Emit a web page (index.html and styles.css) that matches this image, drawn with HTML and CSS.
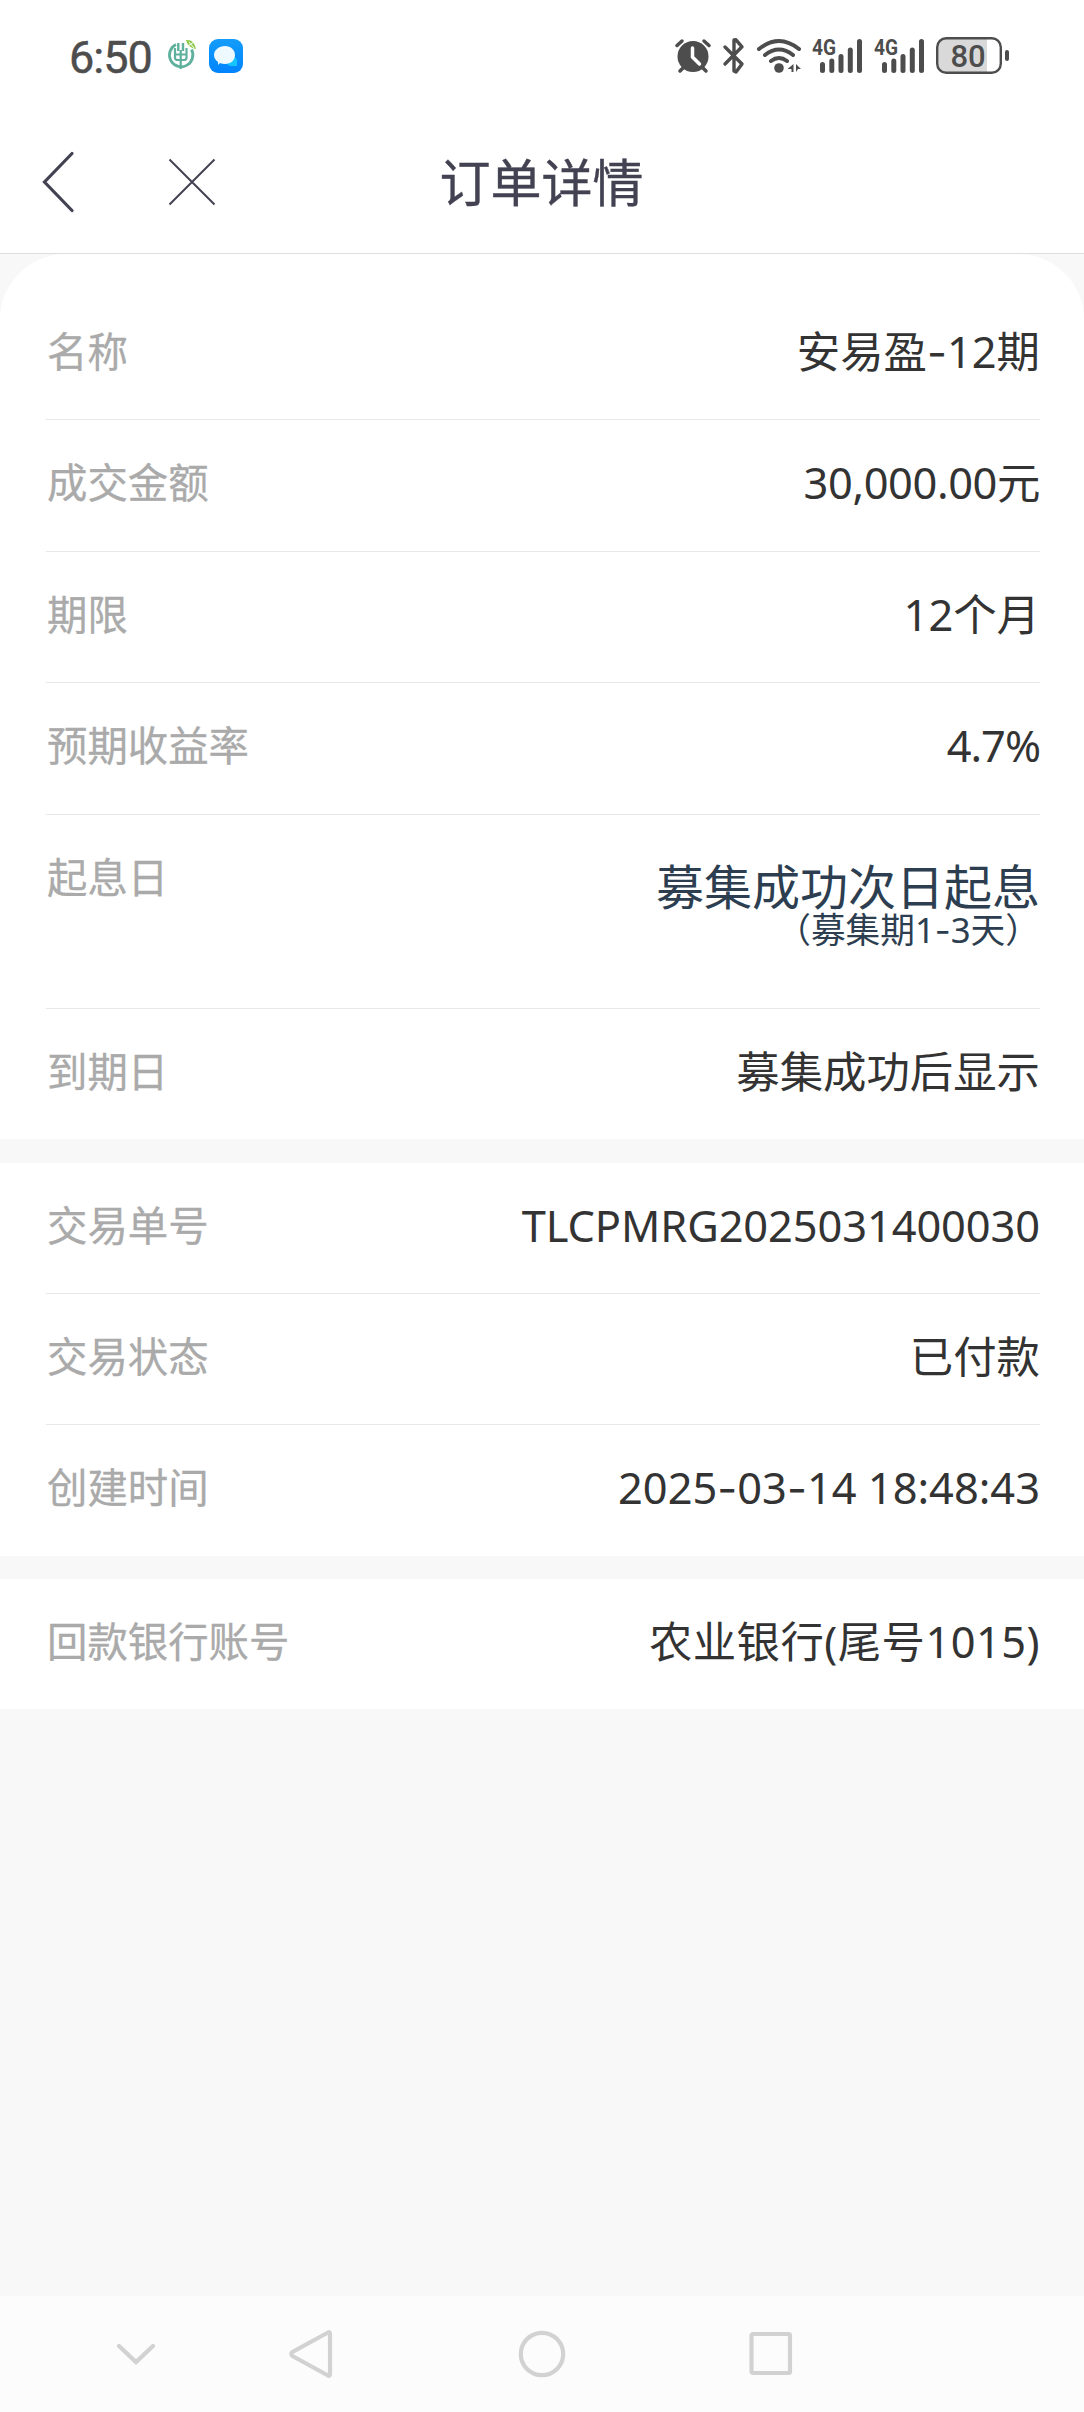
FILE: index.html
```html
<!DOCTYPE html>
<html lang="zh-CN">
<head>
<meta charset="UTF-8">
<title>订单详情</title>
<link rel="stylesheet" href="styles.css">
</head>
<body>
<div class="status">
  <span class="time">6:50</span>
  <svg class="bank" width="32" height="32" viewBox="0 0 32 32" fill="none">
    <g stroke="#5fb09d">
      <path d="M10 5.500a11.700 11.700 0 1 0 15.500 5" stroke-width="2.800"/>
      <path d="M12.300 4v8M17 4v8" stroke-width="2.400"/>
      <path d="M9 9v10q0 2 3 2h5.500q3 0 3-2V9M14.700 11v19M9 15.500h11.500" stroke-width="2.200"/>
    </g>
    <path d="M20 1q8-1 10 9q-8-1-10-9z" fill="#8ecb48"/>
    <path d="M22 7l6-4M23 3l5 6" stroke="#fff" stroke-width="1"/>
  </svg>
  <svg class="chat" width="34" height="34" viewBox="0 0 34 34">
    <defs><linearGradient id="blue" x2="0" y2="1"><stop stop-color="#149cfa"/><stop offset="1" stop-color="#0084ff"/></linearGradient></defs>
    <rect width="34" height="34" rx="9" fill="url(#blue)"/>
    <path d="M20 20q7-4 8 1v6h-6q-4 0-4-4z" fill="#15c3fd"/>
    <path d="M16 7c6 0 10 4 10 9s-4 9-10 9q-3 0-5-1l-2 2v-3q-4-3-4-7c0-5 5-9 11-9z" fill="#eef8ff"/>
  </svg>
  <div class="signals">
    <svg width="36" height="35" viewBox="0 0 36 35" fill="none" stroke="#4d4d4d" stroke-linecap="round">
      <circle cx="18" cy="18.500" r="15.500" fill="#4d4d4d" stroke="none"/>
      <path d="M2 7.500l5-4.500M34 7.500L29 3M8 30l-3 3M28 30l3 3" stroke-width="3.500"/>
      <path d="M17.500 10v9l7 7" stroke="#fff" stroke-width="3.500"/>
    </svg>
    <svg class="bt" width="22" height="36" viewBox="0 0 22 36" fill="none" stroke="#4d4d4d" stroke-width="3.400" stroke-linecap="round" stroke-linejoin="round">
      <path d="M2 9l17 17-6 8-2-1V2l2-.2 6 7L2 26"/>
    </svg>
    <svg class="wifi" width="45" height="36" viewBox="0 0 45 36" fill="none" stroke="#4d4d4d" stroke-width="4" stroke-linecap="round">
      <path d="M2 11q20-16 40 0M8 17q14-11 28 0M14 23q8-6 16 0"/>
      <circle cx="22" cy="30" r="4.800" fill="#4d4d4d" stroke="none"/>
      <path d="M36.500 26v8h-2v-3h-4zM39 26v8l2-3h3z" fill="#4d4d4d" stroke="none"/>
    </svg>
    <svg class="cell" width="50" height="36" viewBox="0 0 50 36">
      <text x="0" y="17" class="net" textLength="24" lengthAdjust="spacingAndGlyphs">4G</text>
      <path d="M10.500 26.500v6M19.800 23v9.500M29 18.500v14M38.300 12v20.500M47.500 3.500v29" class="bars"/>
    </svg>
    <svg class="cell" width="50" height="36" viewBox="0 0 50 36">
      <text x="0" y="17" class="net" textLength="24" lengthAdjust="spacingAndGlyphs">4G</text>
      <path d="M10.500 26.500v6M19.800 23v9.500M29 18.500v14M38.300 12v20.500M47.500 3.500v29" class="bars"/>
    </svg>
    <svg class="battery" width="74" height="37" viewBox="0 0 74 37">
      <path d="M10 1h41v35H10a9 9 0 0 1-9-9V10a9 9 0 0 1 9-9z" fill="#d9d9d9"/>
      <rect x="1.200" y="1.200" width="63.600" height="34.600" rx="9" fill="none" stroke="#4d4d4d" stroke-width="2.400"/>
      <rect x="69" y="13" width="4" height="11" rx="2" fill="#4d4d4d"/>
      <text x="32" y="29.500" text-anchor="middle" class="level">80</text>
    </svg>
  </div>
</div>
<header class="header">
  <svg class="back" width="34" height="62" viewBox="0 0 34 62"><path d="M30 2.500L2.500 31 30 59.500"/></svg>
  <svg class="close" width="48" height="48" viewBox="0 0 48 48"><path d="M1.500 1.500l45 45M46.500 1.500l-45 45"/></svg>
  <h1 class="title">订单详情</h1>
</header>
<main class="content">
  <section class="card card-top">
    <div class="row"><span class="label">名称</span><span class="value">安易盈<span class="dash">-</span>12期</span></div>
    <div class="row"><span class="label">成交金额</span><span class="value amount">30,000.00元</span></div>
    <div class="row"><span class="label">期限</span><span class="value">12个月</span></div>
    <div class="row"><span class="label">预期收益率</span><span class="value rate">4.7%</span></div>
    <div class="row row-tall"><span class="label">起息日</span>
      <div class="start"><span class="start-main">募集成功次日起息</span><span class="start-note">（募集期1<span class="dash">-</span>3天）</span></div>
    </div>
    <div class="row"><span class="label">到期日</span><span class="value">募集成功后显示</span></div>
  </section>
  <section class="card">
    <div class="row"><span class="label">交易单号</span><span class="value code">TLCPMRG2025031400030</span></div>
    <div class="row"><span class="label">交易状态</span><span class="value">已付款</span></div>
    <div class="row"><span class="label">创建时间</span><span class="value">2025<span class="dash">-</span>03<span class="dash">-</span>14 18:48:43</span></div>
  </section>
  <section class="card">
    <div class="row"><span class="label">回款银行账号</span><span class="value account">农业银行(尾号1015)</span></div>
  </section>
</main>
<nav class="nav">
  <svg width="42" height="52" viewBox="0 0 42 52"><path d="M4 18l17 16 17-16"/></svg>
  <svg width="46" height="52" viewBox="0 0 46 52"><path d="M40 4.500q2-1 2 1.500v40q0 2.500-2 1.500L4.500 28q-2.500-2 0-4z"/></svg>
  <svg width="50" height="52" viewBox="0 0 50 52"><circle cx="25" cy="26" r="21.200"/></svg>
  <svg width="46" height="52" viewBox="0 0 46 52"><rect x="4.500" y="6" width="38.500" height="39" rx="1.500"/></svg>
</nav>
</body>
</html>
```
FILE: styles.css
```css
* { box-sizing: border-box; }

body {
  margin: 0;
  width: 1084px;
  height: 2412px;
  display: flex;
  flex-direction: column;
  background: #f8f8f8;
  font-family: "Noto Sans", "Noto Sans CJK SC", sans-serif;
  overflow: hidden;
}

svg { display: block; flex: none; overflow: visible; }

/* system status bar */
.status {
  height: 110px;
  flex: none;
  display: flex;
  align-items: flex-start;
  padding: 37px 74px 0 69px;
  background: #fff;
}

.time {
  width: 86px;
  font: 400 45px/42px Roboto, sans-serif;
  letter-spacing: -1px;
  color: #4d4d4d;
  -webkit-text-stroke: 0.500px #4d4d4d;
}

.bank { margin: 2px 0 0 11px; }
.chat { margin: 2px 0 0 11px; }

.signals {
  display: flex;
  align-items: flex-start;
  margin-left: auto;
  padding-top: 1px;
}

.bt { margin-left: 12px; }
.wifi { margin-left: 12px; }
.cell { margin-left: 12px; }
.wifi + .cell { margin-left: 10px; }
.battery { margin: -1px 0 0 12px; }

.net { font: 700 22px Roboto, sans-serif; fill: #4d4d4d; }
.bars { fill: none; stroke: #4d4d4d; stroke-width: 5px; stroke-linecap: round; }
.level { font: 500 31px Roboto, sans-serif; fill: #4d4d4d; }

/* title bar */
.header {
  height: 144px;
  flex: none;
  display: grid;
  grid-template-columns: 126px 101px 545px 1fr;
  align-items: start;
  padding: 41px 0 0 42px;
  background: #fff;
  border-bottom: 1px solid #dedede;
}

.header path { fill: none; stroke: #434252; }
.back { stroke-width: 3.200px; stroke-linecap: round; }
.close { margin-top: 7px; stroke-width: 2px; }

.title {
  margin: 0;
  text-align: center;
  font-size: 51px;
  line-height: 62px;
  font-weight: 400;
  color: #434252;
  -webkit-text-stroke: 0.400px #434252;
}

/* order details */
.content {
  flex: 1;
  display: flex;
  flex-direction: column;
  gap: 23.400px;
}

.card { padding: 0 44px 0 46px; background: #fff; }
.card-top { padding-top: 35px; border-radius: 66px 66px 0 0; }

.row {
  display: flex;
  justify-content: space-between;
  height: 131.400px;
  line-height: 126px;
  border-bottom: 1px solid #e8e8e8;
}

.row:last-child { height: 130.400px; border-bottom: 0; }
.row-tall { height: 194.200px; }

.label { padding-left: 1px; font-size: 40.400px; color: #aaa; -webkit-text-stroke: 0.300px #aaa; }
.value { font-size: 43.400px; color: #333; }
.dash { font-family: Inter, sans-serif; }
.amount { letter-spacing: -0.400px; }
.rate { letter-spacing: -1px; }
.code { letter-spacing: -0.100px; }
.account { letter-spacing: 0.450px; }

.start {
  display: flex;
  flex-direction: column;
  align-items: flex-end;
  padding-top: 47px;
  color: #2c3e50;
}

.start-main { font-size: 48px; line-height: 50px; }
.start-note { font-size: 34.700px; line-height: 36px; }

/* system navigation bar */
.nav {
  height: 116px;
  flex: none;
  display: grid;
  grid-template-columns: 173px 229px 230px 1fr;
  align-items: start;
  padding: 32px 0 0 115px;
  background: #fcfcfc;
}

.nav svg { fill: none; stroke: #d2d2d2; stroke-width: 4.200px; stroke-linecap: round; }
```
